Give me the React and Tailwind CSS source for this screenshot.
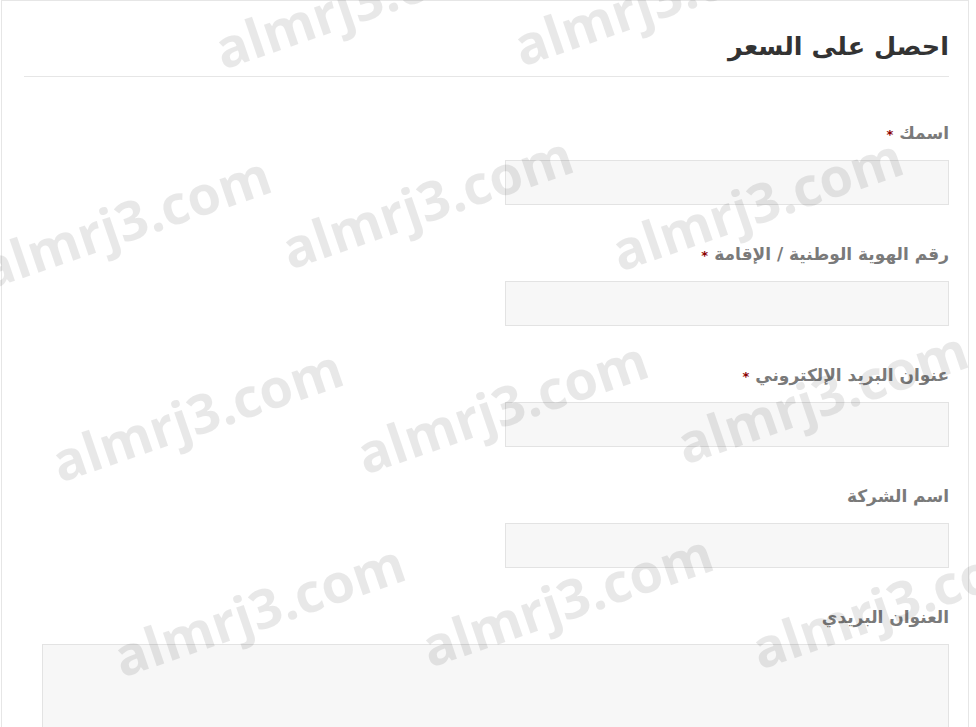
const marks = [
  { x: 223, y: 70 },
  { x: 522, y: 67 },
  { x: -12, y: 290 },
  { x: 290, y: 270 },
  { x: 620, y: 272 },
  { x: 60, y: 483 },
  { x: 365, y: 475 },
  { x: 685, y: 465 },
  { x: 122, y: 678 },
  { x: 430, y: 668 },
  { x: 760, y: 670 },
];

const fields = [
  { label: "اسمك", required: true },
  { label: "رقم الهوية الوطنية / الإقامة", required: true },
  { label: "عنوان البريد الإلكتروني", required: true },
  { label: "اسم الشركة" },
];

function Field({ label, required }) {
  return (
    <div className="mb-[37px]">
      <label className="block h-[24px] text-[17px] leading-[24px] font-bold text-[#7a7a7a]">
        {label}
        {required && (
          <span className="text-[#8b0000] text-[13px] leading-none mr-[6px]">*</span>
        )}
      </label>
      <input
        type="text"
        className="block mt-[15px] w-[444px] h-[45px] bg-[#f7f7f7] border border-[#e3e3e3] outline-none"
      />
    </div>
  );
}

export default function App() {
  return (
    <div className="relative h-[727px] overflow-hidden bg-white font-['DejaVu_Sans',sans-serif]">
      <div
        dir="rtl"
        className="ml-[1px] w-[968px] h-[740px] border border-[#e6e6e6] pr-[19px] pl-[22px]"
      >
        {/* Header */}
        <div className="pt-[27px] pb-[11px] border-b border-[#e6e6e6]">
          <h2 className="h-[37px] text-[25.5px] leading-[37px] font-bold text-[#333]">
            احصل على السعر
          </h2>
        </div>

        {/* Form */}
        <div className="pt-[44px]">
          {fields.map((f) => (
            <Field key={f.label} {...f} />
          ))}
          <div>
            <label className="block h-[24px] text-[17px] leading-[24px] font-bold text-[#7a7a7a]">
              العنوان البريدي
            </label>
            <textarea className="block mt-[15px] w-[907px] h-[120px] bg-[#f7f7f7] border border-[#e3e3e3] outline-none resize-none" />
          </div>
        </div>
      </div>

      {/* Watermark */}
      <div className="pointer-events-none absolute inset-0">
        {marks.map((m, i) => (
          <span
            key={i}
            className="absolute whitespace-nowrap text-[54px] leading-none font-bold font-['Open_Sans',sans-serif] text-[rgba(0,0,0,0.09)] origin-[0_48px] rotate-[-19deg]"
            style={{ left: m.x, top: m.y - 48 }}
          >
            almrj3.com
          </span>
        ))}
      </div>
    </div>
  );
}
